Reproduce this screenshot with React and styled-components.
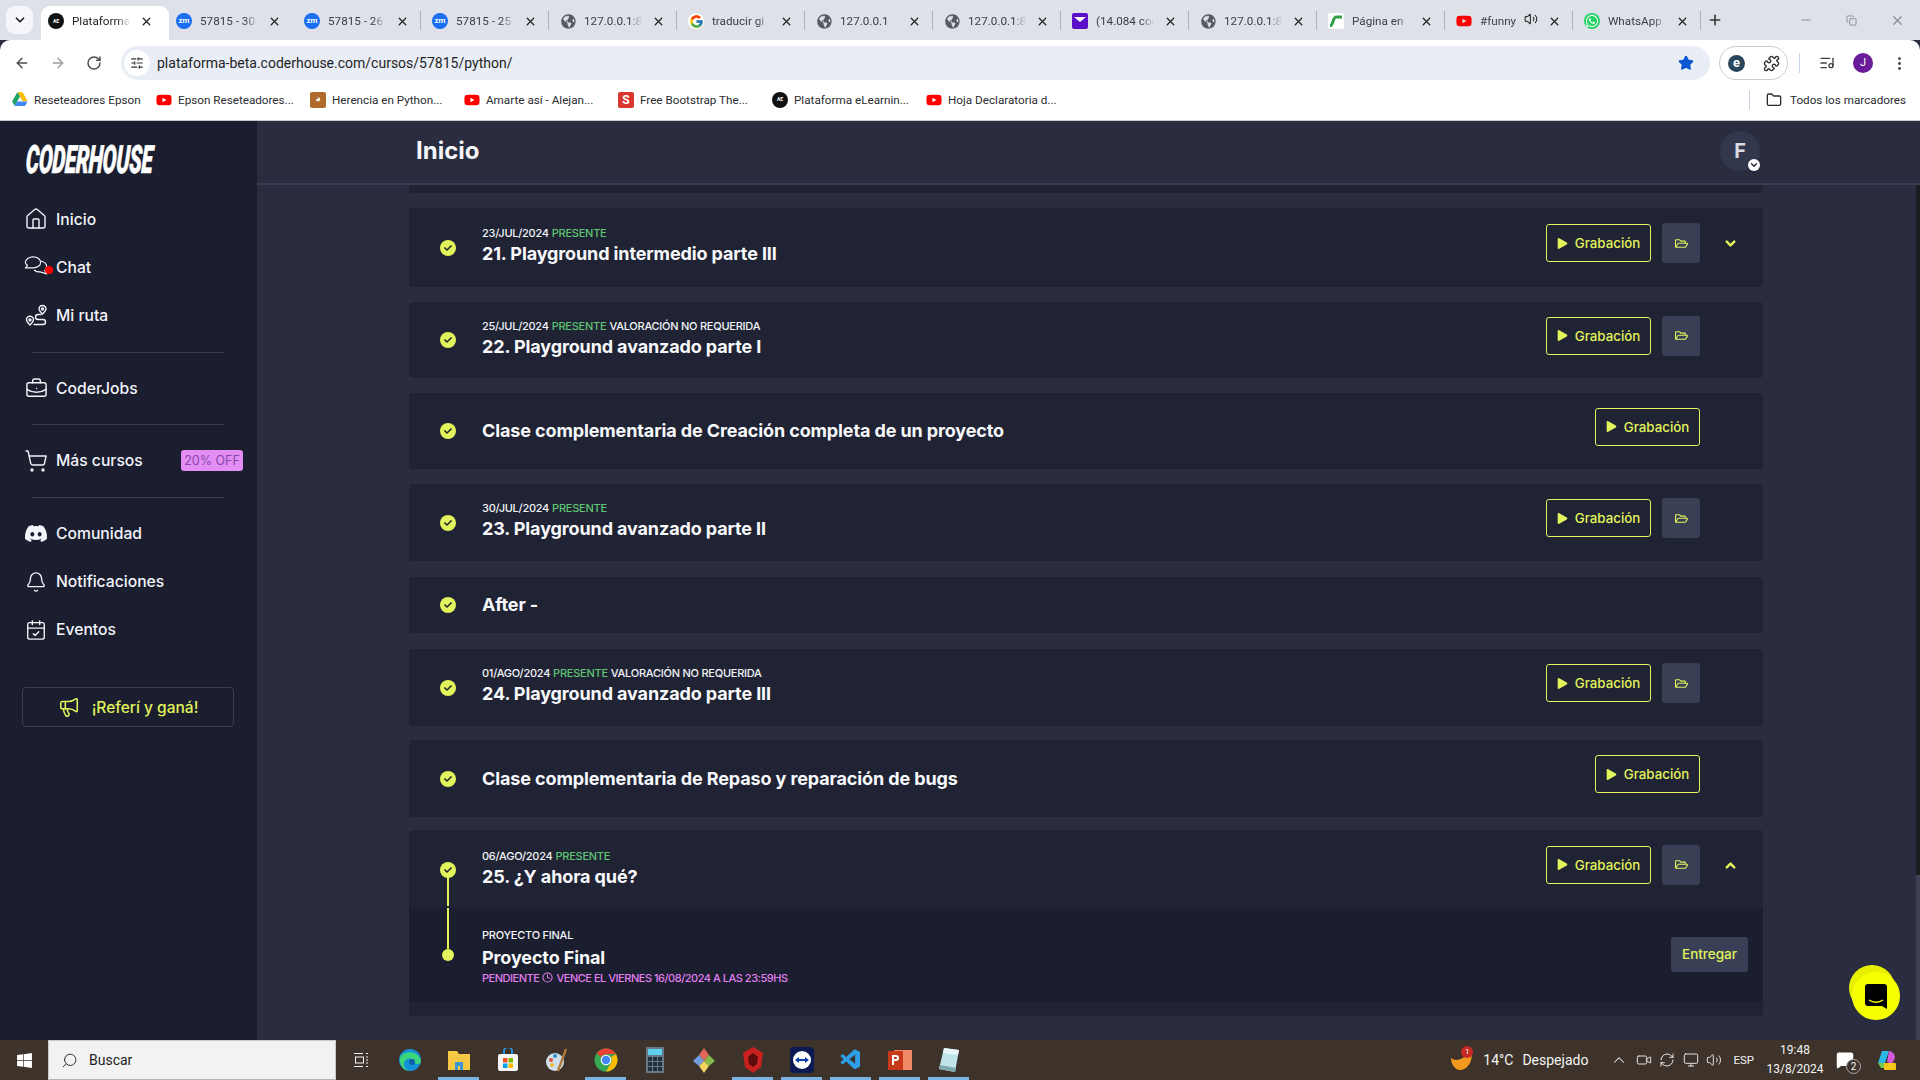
import React from "react";
import styled, { createGlobalStyle } from "styled-components";
import {
  ArrowLeft, ArrowRight, Bell, BriefcaseBusiness, CalendarCheck, ChevronDown, ChevronUp, Clock, Copy, EllipsisVertical, Folder,
  House, ListMusic, Megaphone, Minus, Plus, Puzzle, RotateCw, Search, ShoppingCart, SlidersHorizontal,
  Star, Volume2, X, Video, Monitor, MessageSquare, RefreshCw
} from "lucide-react";
import { FaDiscord, FaGlobeAmericas, FaPlay, FaRegFolderOpen, FaWhatsapp, FaWindows, FaYoutube, FaCheck } from "react-icons/fa";
import { FcGoogle } from "react-icons/fc";
import { VscVscode } from "react-icons/vsc";

const lime = "#e2f35c";
const chromeFont = `"Roboto", "Liberation Sans", sans-serif`;

const GlobalStyle = createGlobalStyle`
  html, body { margin: 0; height: 100%; overflow: hidden; background: #2a2d3f; }
  * { box-sizing: border-box; }
  body { font-family: "Inter", "Liberation Sans", sans-serif; }
`;

const Shell = styled.div`
  display: flex;
  flex-direction: column;
  height: 1080px;
  width: 1920px;
  overflow: hidden;
`;

/* browser chrome */
const TabStrip = styled.div`
  display: flex;
  align-items: center;
  height: 40px;
  background: #dee1e7;
  padding-left: 6px;
  font-family: ${chromeFont};
`;

const TabMenu = styled.div`
  width: 27px;
  height: 28px;
  margin-top: 0;
  margin-right: 8px;
  border-radius: 9px;
  background: #f4f6fb;
  color: #222;
  display: flex;
  align-items: center;
  justify-content: center;
`;

const Tab = styled.div`
  position: relative;
  display: flex;
  align-items: center;
  width: 128px;
  height: 34px;
  margin-top: 6px;
  padding: 0 0 4px 7px;
  gap: 8px;
  font-size: 11.7px;
  color: ${({ $active }) => ($active ? "#1f1f1f" : "#3b3f45")};
  border-radius: 9px 9px 0 0;
  background: ${({ $active }) => ($active ? "#fff" : "transparent")};

  &::after {
    content: "";
    position: absolute;
    right: 4px;
    top: 5px;
    width: 1px;
    height: 19px;
    background: ${({ $plain }) => ($plain ? "transparent" : "#aeb2b8")};
  }
`;

const TabLabel = styled.span`
  width: 58px;
  white-space: nowrap;
  overflow: hidden;
  mask-image: linear-gradient(90deg, #000 78%, transparent);
`;

const TabClose = styled.span`
  display: flex;
  margin-left: auto;
  margin-right: 16px;
  color: #222;
`;

const Speaker = styled.span`
  display: flex;
  position: absolute;
  left: 75px;
  top: 6px;
  color: #333;
`;

const Fav = styled.span`
  width: 16px;
  height: 16px;
  flex: none;
  display: flex;
  align-items: center;
  justify-content: center;
  border-radius: ${({ $square }) => ($square ? "2px" : "50%")};
  background: ${({ $bg }) => $bg || "transparent"};
  color: ${({ $fg }) => $fg || "#fff"};
  font-size: ${({ $size }) => $size || 8}px;
  font-weight: 700;
  line-height: 1;
  overflow: hidden;
`;

const NewTab = styled.span`
  display: flex;
  margin: 0 0 0 2px;
  color: #333;
`;

const WindowControls = styled.div`
  display: flex;
  align-items: center;
  margin-left: auto;
  padding-right: 15px;
  gap: 33px;
  color: #8a8d92;
`;

const Toolbar = styled.div`
  display: flex;
  align-items: center;
  height: 40px;
  padding-top: 6px;
  background: #fff;
  border-radius: 10px 10px 0 0;
`;

const NavIcons = styled.div`
  display: flex;
  width: 121px;
  padding-left: 14px;
  gap: 20px;
  color: #4a4d52;
`;

const UrlBar = styled.div`
  display: flex;
  align-items: center;
  width: 1589px;
  height: 34px;
  border-radius: 17px;
  background: #e9edf6;
  padding: 0 16px 0 3px;
  font: 400 14px ${chromeFont};
  color: #1f1f1f;
`;

const SiteInfo = styled.span`
  width: 26px;
  height: 26px;
  margin-right: 7px;
  border-radius: 50%;
  background: #fff;
  display: flex;
  align-items: center;
  justify-content: center;
  color: #333;
`;

const UrlStar = styled.span`
  display: flex;
  margin-left: auto;
  color: #0b57d0;
`;

const ExtensionPill = styled.div`
  display: flex;
  align-items: center;
  justify-content: space-between;
  width: 69px;
  height: 34px;
  margin-left: 9px;
  padding: 0 7px 0 8px;
  border: 1px solid #c9ccd2;
  border-radius: 17px;
  color: #333;
`;

const ExtE = styled.span`
  width: 17px;
  height: 17px;
  border-radius: 50%;
  background: #29465c;
  color: #fff;
  font: 700 13px/16px ${chromeFont};
  text-align: center;
`;

const ToolSep = styled.span`
  width: 1px;
  height: 20px;
  margin: 0 19px 0 11px;
  background: #c8d4e4;
`;

const ToolRight = styled.div`
  display: flex;
  align-items: center;
  gap: 18px;
  color: #3c3f43;
`;

const Account = styled.span`
  width: 20px;
  height: 20px;
  border-radius: 50%;
  background: #6a1b9a;
  color: #fff;
  font: 400 11px/20px ${chromeFont};
  text-align: center;
`;

const BookmarkBar = styled.div`
  display: flex;
  align-items: center;
  height: 41px;
  padding: 0 14px 1px 12px;
  background: #fff;
  border-bottom: 1px solid #c8cacc;
  font: 400 11.7px ${chromeFont};
  color: #2a2c30;
`;

const Bookmark = styled.span`
  display: flex;
  align-items: center;
  gap: 6px;
  width: ${({ $first }) => ($first ? 144 : 154)}px;
  white-space: nowrap;
`;

const AllBookmarks = styled.span`
  display: flex;
  align-items: center;
  margin-left: auto;
  gap: 8px;
  padding-left: 16px;
  border-left: 1px solid #c8d4e4;
  height: 20px;
  white-space: nowrap;
`;

/* page */
const Page = styled.div`
  display: flex;
  flex: 1;
  min-height: 0;
`;

const Sidebar = styled.aside`
  width: 257px;
  flex: none;
  background: #1b1e2e;
  color: #f2f4fa;
  padding-top: 23px;
`;

const LogoBox = styled.div`
  height: 51px;
  padding-left: 26px;
`;

const Logo = styled.div`
  width: 230px;
  font: italic 900 39px/32px "Roboto", sans-serif;
  letter-spacing: -0.5px;
  color: #fff;
  white-space: nowrap;
  transform: scaleX(0.53) skewX(-6deg);
  transform-origin: left center;
  -webkit-text-stroke: 0.6px #fff;
`;

const NavItem = styled.div`
  position: relative;
  display: flex;
  align-items: center;
  height: 48.2px;
  padding: 0 14px 0 24px;
  gap: 8px;
  font-size: 15.7px;
  font-weight: 500;
`;

const NavIcon = styled.span`
  width: 24px;
  height: 24px;
  display: flex;
  align-items: center;
  justify-content: center;
`;

const Dot = styled.span`
  position: absolute;
  left: 45px;
  top: 23px;
  width: 8px;
  height: 8px;
  border-radius: 50%;
  background: #ff0000;
`;

const OffBadge = styled.span`
  margin-left: auto;
  width: 62px;
  height: 21px;
  border-radius: 3px;
  background: #e48df5;
  color: #8549a8;
  font-size: 12.5px;
  font-weight: 400;
  line-height: 21px;
  text-align: center;
`;

const Divider = styled.hr`
  width: 192px;
  height: 1px;
  margin: 12px 0 11.5px 32px;
  border: 0;
  background: #383c50;
`;

const ReferButton = styled.div`
  display: flex;
  align-items: center;
  justify-content: center;
  gap: 12px;
  width: 212px;
  height: 40px;
  margin: 33px 0 0 22px;
  border: 1px solid #3a3e52;
  border-radius: 4px;
  color: ${lime};
  font-size: 15.5px;
  font-weight: 500;
`;

const Main = styled.main`
  flex: 1;
  min-width: 0;
  display: flex;
  flex-direction: column;
  background: #2a2d3f;
`;

const Header = styled.header`
  display: flex;
  align-items: center;
  justify-content: space-between;
  flex: none;
  height: 64px;
  padding: 0 160px 2px 159px;
  border-bottom: 2px solid #393e55;
`;

const Title = styled.h1`
  margin: 0 0 1px;
  font-size: 24px;
  font-weight: 700;
  color: #f5f6fa;
`;

const Avatar = styled.div`
  position: relative;
  width: 40px;
  height: 40px;
  border-radius: 50%;
  background: #32374c;
  color: #d9dbe2;
  font-size: 20px;
  font-weight: 700;
  line-height: 40px;
  text-align: center;
`;

const AvatarBadge = styled.span`
  position: absolute;
  right: 0;
  bottom: 0;
  width: 12px;
  height: 12px;
  border-radius: 50%;
  background: #fff;
  color: #1b1e2e;
  display: flex;
  align-items: center;
  justify-content: center;
`;

const Content = styled.div`
  display: flex;
  flex: 1;
  min-height: 0;
`;

const List = styled.div`
  flex: 1;
  min-width: 0;
  padding: 0 153px 0 152px;
  overflow: hidden;
`;

const ScrollTrack = styled.div`
  width: 4px;
  flex: none;
  display: flex;
  background: #1b1c20;
`;

const ScrollThumb = styled.div`
  width: 4px;
  height: 165px;
  margin-top: auto;
  background: #3d4052;
`;

const Card = styled.section`
  background: #202333;
  border-radius: ${({ $cut }) => ($cut ? "0 0 4px 4px" : "4px")};
  margin-bottom: ${({ $gap }) => $gap}px;
  padding-bottom: ${({ $pad }) => $pad || 0}px;
`;

const Row = styled.div`
  display: flex;
  align-items: center;
  height: ${({ $h }) => $h}px;
  background: ${({ $inner }) => ($inner ? "#1b1e2e" : "transparent")};
`;

const StatusCol = styled.div`
  position: relative;
  width: 73px;
  flex: none;
  display: flex;
  justify-content: center;
  padding-left: 5px;
  padding-top: ${({ $nudge }) => $nudge || 0}px;
`;

const Check = styled.span`
  position: relative;
  z-index: 1;
  width: 16px;
  height: 16px;
  border-radius: 50%;
  background: ${lime};
  color: #20232f;
  display: flex;
  align-items: center;
  justify-content: center;
`;

const FinalDot = styled.span`
  position: relative;
  z-index: 1;
  width: 12px;
  height: 12px;
  border-radius: 50%;
  background: ${lime};
`;

const Connector = styled.span`
  position: absolute;
  left: 38px;
  width: 2px;
  background: ${lime};
  top: ${({ $top }) => $top}px;
  height: ${({ $h }) => $h}px;
`;

const Info = styled.div`
  flex: 1;
  min-width: 0;
  padding-bottom: ${({ $lift }) => $lift || 0}px;
  padding-top: ${({ $drop }) => $drop || 0}px;
`;

const Meta = styled.div`
  display: flex;
  gap: 3px;
  font-size: 11px;
  font-weight: 500;
  line-height: 14px;
  letter-spacing: -0.25px;
  color: #f2f4fa;
  text-transform: uppercase;
`;

const Present = styled.span`
  color: #5fc573;
`;

const ClassTitle = styled.h3`
  margin: ${({ $top }) => $top ?? 2}px 0 0;
  font-size: 18px;
  font-weight: 700;
  line-height: 24px;
  letter-spacing: -0.12px;
  color: #f8f9fc;
`;

const Pending = styled.div`
  display: flex;
  align-items: center;
  gap: 3px;
  margin-top: 1px;
  font-size: 11px;
  font-weight: 500;
  line-height: 14px;
  letter-spacing: -0.48px;
  color: #e07ff0;
`;

const Actions = styled.div`
  display: flex;
  align-items: center;
  gap: 11px;
  flex: none;
  margin-bottom: 9px;
`;

const RecButton = styled.div`
  display: flex;
  align-items: center;
  justify-content: center;
  gap: 7px;
  width: 105px;
  height: 38px;
  border: 1px solid ${lime};
  border-radius: 3px;
  color: ${lime};
  font-size: 13.3px;
  font-weight: 500;
`;

const FolderButton = styled.div`
  width: 38px;
  height: 40px;
  border-radius: 3px;
  background: #394056;
  color: ${lime};
  display: flex;
  align-items: center;
  justify-content: center;
`;

const ChevronSlot = styled.div`
  width: 63px;
  flex: none;
  display: flex;
  justify-content: center;
  padding: 0 3px 8px 0;
  color: ${lime};
`;

const DeliverButton = styled.div`
  width: 77px;
  height: 35px;
  margin: 0 15px 1px 0;
  border-radius: 3px;
  background: #394056;
  color: ${lime};
  font-size: 13.5px;
  font-weight: 500;
  line-height: 35px;
  text-align: center;
`;

const Widget = styled.div`
  position: absolute;
  left: 1852px;
  top: 972px;
  width: 48px;
  height: 48px;
  border-radius: 50%;
  background: #f6ff00;
  box-shadow: -4px -8px 0 -1px #e8ef00;
  display: flex;
  align-items: center;
  justify-content: center;
`;

/* windows taskbar */
const Taskbar = styled.footer`
  display: flex;
  align-items: center;
  flex: none;
  height: 40px;
  background: #3d332b;
  color: #f3f3f3;
  font-family: ${chromeFont};
`;

const StartBtn = styled.div`
  width: 48px;
  display: flex;
  justify-content: center;
  color: #fff;
`;

const SearchBox = styled.div`
  display: flex;
  align-items: center;
  gap: 11px;
  width: 288px;
  height: 40px;
  padding-left: 12px;
  background: #f2f2f2;
  border: 1px solid #c9c9c9;
  border-bottom-color: #b5b5b5;
  color: #222;
  font-size: 14px;
`;

const MirroredSearch = styled(Search)`
  transform: scaleX(-1);
`;

const TaskView = styled.div`
  width: 49px;
  display: flex;
  justify-content: center;
  color: #f3f3f3;
`;

const TaskApps = styled.div`
  display: flex;
  height: 40px;
`;

const TaskApp = styled.div`
  width: 49px;
  height: 40px;
  display: flex;
  align-items: center;
  justify-content: center;
  padding-bottom: 1px;
  box-shadow: ${({ $open }) => ($open ? "inset 0 -3px 0 0 #7db3e2" : "none")};
  clip-path: inset(0 4px 0 4px);
`;

const Tray = styled.div`
  display: flex;
  align-items: center;
  margin-left: auto;
  height: 40px;
  font-size: 14px;
`;

const Weather = styled.div`
  position: relative;
  display: flex;
  align-items: center;
  margin-right: 22px;
  gap: 9px;
  font-size: 14px;
`;

const WeatherAlert = styled.span`
  position: absolute;
  left: 11px;
  top: -3px;
  width: 12px;
  height: 12px;
  border-radius: 50%;
  background: #c62a22;
  color: #fff;
  font-size: 8px;
  line-height: 12px;
  text-align: center;
`;

const TrayIcons = styled.div`
  display: flex;
  align-items: center;
  gap: 7.5px;
  color: #eee;
`;

const Lang = styled.span`
  margin: 0 9px 0 11px;
  font-size: 11.5px;
`;

const Clocks = styled.div`
  width: 64px;
  text-align: center;
  font-size: 12px;
  line-height: 19px;
`;

const Notify = styled.div`
  position: relative;
  display: flex;
  margin-left: 9px;
  margin-right: 22px;
  color: #fff;
`;

const NotifyCount = styled.span`
  position: absolute;
  left: 10px;
  top: 8px;
  width: 15px;
  height: 15px;
  border-radius: 50%;
  background: #3d332b;
  border: 1px solid #aaa;
  font-size: 10px;
  line-height: 13px;
  text-align: center;
`;

const CopilotBox = styled.div`
  display: flex;
  padding-right: 24px;
`;

const tabs = [
  { label: "Plataforma", fav: "coder", active: true },
  { label: "57815 - 30", fav: "zoom", plain: true },
  { label: "57815 - 26", fav: "zoom" },
  { label: "57815 - 25", fav: "zoom" },
  { label: "127.0.0.1:8", fav: "globe" },
  { label: "traducir gi", fav: "google" },
  { label: "127.0.0.1", fav: "globe" },
  { label: "127.0.0.1:8", fav: "globe" },
  { label: "(14.084 cor", fav: "mail" },
  { label: "127.0.0.1:8", fav: "globe" },
  { label: "Página en", fav: "flag" },
  { label: "#funny", fav: "yt", muted: true },
  { label: "WhatsApp", fav: "wa" }
];

const Favicon = ({ kind }) => {
  switch (kind) {
    case "coder":
      return <Fav $bg="#111" $size={5}>AE</Fav>;
    case "zoom":
      return <Fav $bg="#1a6ef0" $size={8}>zm</Fav>;
    case "globe":
      return <Fav $fg="#555a61"><FaGlobeAmericas size={15} /></Fav>;
    case "google":
      return <Fav $bg="#fff"><FcGoogle size={15} /></Fav>;
    case "mail":
      return <Fav $square $bg="#5b10c9"><svg width="12" height="10" viewBox="0 0 12 10"><path d="M0 1h12L6 6z" fill="#fff" /></svg></Fav>;
    case "flag":
      return <Fav $square $bg="#fff"><svg width="14" height="12" viewBox="0 0 14 12"><path d="M1 11c3 0 3-9 6-9h6" stroke="#2ea043" strokeWidth="3" fill="none" /></svg></Fav>;
    case "yt":
      return <Fav $fg="#f00" $square><FaYoutube size={16} /></Fav>;
    case "wa":
      return <Fav $bg="#25d366"><FaWhatsapp size={14} /></Fav>;
    case "s":
      return <Fav $square $bg="#d9372d" $size={12}>S</Fav>;
    case "drive":
      return <Fav><svg width="16" height="15" viewBox="0 0 16 15"><path d="M5.5 0h5l5 9h-5z" fill="#fbbc04" /><path d="M5.5 0L0 9.5l2.5 4.5L8 4.500z" fill="#1fa463" /><path d="M2.5 14h10.5l2.5-4.500H5z" fill="#4285f4" /></svg></Fav>;
    case "cat":
      return <Fav $square $bg="#b06a2c" $size={9}>◕</Fav>;
    default:
      return null;
  }
};

const bookmarks = [
  ["drive", "Reseteadores Epson"],
  ["yt", "Epson Reseteadores..."],
  ["cat", "Herencia en Python..."],
  ["yt", "Amarte así - Alejan..."],
  ["s", "Free Bootstrap The..."],
  ["coder", "Plataforma eLearnin..."],
  ["yt", "Hoja Declaratoria d..."]
];

const TabBar = () => (
  <TabStrip>
    <TabMenu><ChevronDown size={14} strokeWidth={3} /></TabMenu>
    {tabs.map((t, i) => (
      <Tab key={i} $active={t.active} $plain={t.active || t.plain}>
        <Favicon kind={t.fav} />
        <TabLabel>{t.label}</TabLabel>
        {t.muted && <Speaker><Volume2 size={14} /></Speaker>}
        <TabClose><X size={13} strokeWidth={2.4} /></TabClose>
      </Tab>
    ))}
    <NewTab><Plus size={16} strokeWidth={2.4} /></NewTab>
    <WindowControls>
      <Minus size={14} />
      <Copy size={11} />
      <X size={15} />
    </WindowControls>
  </TabStrip>
);

const AddressRow = () => (
  <Toolbar>
    <NavIcons>
      <ArrowLeft size={16} strokeWidth={2.2} />
      <ArrowRight size={16} strokeWidth={2.2} color="#9a9da2" />
      <RotateCw size={16} strokeWidth={2.2} />
    </NavIcons>
    <UrlBar>
      <SiteInfo><SlidersHorizontal size={14} /></SiteInfo>
      plataforma-beta.coderhouse.com/cursos/57815/python/
      <UrlStar><Star size={16} fill="#0b57d0" /></UrlStar>
    </UrlBar>
    <ExtensionPill>
      <ExtE>e</ExtE>
      <Puzzle size={17} />
    </ExtensionPill>
    <ToolSep />
    <ToolRight>
      <ListMusic size={16} />
      <Account>J</Account>
      <EllipsisVertical size={17} />
    </ToolRight>
  </Toolbar>
);

const Bookmarks = () => (
  <BookmarkBar>
    {bookmarks.map(([fav, label], i) => (
      <Bookmark key={label} $first={i === 0}><Favicon kind={fav} />{label}</Bookmark>
    ))}
    <AllBookmarks><Folder size={16} />Todos los marcadores</AllBookmarks>
  </BookmarkBar>
);

const ChatIcon = () => (
  <svg width="28" height="26" viewBox="0 0 26 24" fill="none" stroke="currentColor" strokeWidth="1.3" strokeLinejoin="round">
    <path d="M10 1c4.500 0 8 2.600 8 6s-3.500 6-8 6H1.500l2.300-2.600C2.600 9.400 1.500 8.300 1.500 7 1.500 3.600 5.500 1 10 1z" />
    <path d="M18 5.500c3.500.7 6.500 3 6.500 6.300 0 1.600-.8 2.900-2 3.900l2 3.800-7-2.200c-2.800 0-5.300-.7-6.500-2.300" />
  </svg>
);

const RouteIcon = () => (
  <svg width="24" height="24" viewBox="0 0 24 24" fill="none" stroke="currentColor" strokeWidth="1.4">
    <path d="M6 22c-2-2-3.500-3.500-3.500-5.200a3.500 3.500 0 0 1 7 0C9.500 18.500 8 20 6 22z" />
    <circle cx="6" cy="17" r="1" />
    <path d="M18.500 11c-2-2-3.500-3.200-3.500-5a3.500 3.500 0 0 1 7 0c0 1.800-1.500 3-3.500 5z" />
    <circle cx="18.500" cy="6" r="1" />
    <path d="M17 11.500h-3a2.500 2.500 0 0 0 0 5h5a2.500 2.500 0 0 1 0 5H10" strokeLinecap="round" />
  </svg>
);

const navTop = [
  [<House size={24} strokeWidth={1.4} />, "Inicio"],
  [<ChatIcon />, "Chat", true],
  [<RouteIcon />, "Mi ruta"]
];

const navBottom = [
  [<FaDiscord size={25} />, "Comunidad"],
  [<Bell size={22} strokeWidth={1.5} />, "Notificaciones"],
  [<CalendarCheck size={22} strokeWidth={1.5} />, "Eventos"]
];

const Nav = ({ icon, label, dot, children }) => (
  <NavItem>
    <NavIcon>{icon}</NavIcon>
    {dot && <Dot />}
    {label}
    {children}
  </NavItem>
);

const Side = () => (
  <Sidebar>
    <LogoBox><Logo>CODERHOUSE</Logo></LogoBox>
    {navTop.map(([icon, label, dot]) => <Nav key={label} icon={icon} label={label} dot={dot} />)}
    <Divider />
    <Nav icon={<BriefcaseBusiness size={23} strokeWidth={1.5} />} label="CoderJobs" />
    <Divider />
    <Nav icon={<ShoppingCart size={24} strokeWidth={1.4} />} label="Más cursos">
      <OffBadge>20% OFF</OffBadge>
    </Nav>
    <Divider />
    {navBottom.map(([icon, label]) => <Nav key={label} icon={icon} label={label} />)}
    <ReferButton><Megaphone size={22} strokeWidth={1.7} />¡Referí y ganá!</ReferButton>
  </Sidebar>
);

const classes = [
  { h: 79, gap: 15, date: "23/Jul/2024", name: "21. Playground intermedio parte III", folder: true, chevron: "down" },
  { h: 76, gap: 15, date: "25/Jul/2024", name: "22. Playground avanzado parte I", folder: true, note: "Valoración no requerida" },
  { h: 76, gap: 15, name: "Clase complementaria de Creación completa de un proyecto" },
  { h: 77, gap: 16, date: "30/Jul/2024", name: "23. Playground avanzado parte II", folder: true },
  { h: 56, gap: 16, name: "After -", noRec: true },
  { h: 77, gap: 14, date: "01/Ago/2024", name: "24. Playground avanzado parte III", folder: true, note: "Valoración no requerida" },
  { h: 77, gap: 13, name: "Clase complementaria de Repaso y reparación de bugs" }
];

const RecordActions = ({ folder, chevron }) => (
  <>
    <Actions>
      <RecButton><FaPlay size={11} />Grabación</RecButton>
      {folder && <FolderButton><FaRegFolderOpen size={13} /></FolderButton>}
    </Actions>
    <ChevronSlot>
      {chevron === "down" && <ChevronDown size={15} strokeWidth={4} />}
      {chevron === "up" && <ChevronUp size={15} strokeWidth={4} />}
    </ChevronSlot>
  </>
);

const ClassInfo = ({ date, note, name, lift }) => (
  <Info $lift={lift}>
    {date && (
      <Meta>
        {date} <Present>Presente</Present> {note && <span>{note}</span>}
      </Meta>
    )}
    <ClassTitle $top={date ? 2 : 0}>{name}</ClassTitle>
  </Info>
);

const DoneCheck = () => <Check><FaCheck size={8} /></Check>;

const Lessons = () => (
  <List>
    <Card $cut $gap={15}><Row $h={8} /></Card>
    {classes.map((c) => (
      <Card key={c.name} $gap={c.gap}>
        <Row $h={c.h}>
          <StatusCol><DoneCheck /></StatusCol>
          <ClassInfo {...c} lift={c.date ? 3 : 0} />
          {!c.noRec && <RecordActions folder={c.folder} chevron={c.chevron} />}
        </Row>
      </Card>
    ))}
    <Card $gap={0} $pad={14}>
      <Row $h={78}>
        <StatusCol $nudge={2}>
          <Connector $top={16} $h={30} />
          <DoneCheck />
        </StatusCol>
        <ClassInfo date="06/Ago/2024" name="25. ¿Y ahora qué?" />
        <RecordActions folder chevron="up" />
      </Row>
      <Row $inner $h={94}>
        <StatusCol>
          <Connector $top={-41} $h={41} />
          <FinalDot />
        </StatusCol>
        <Info $drop={2}>
          <Meta>Proyecto final</Meta>
          <ClassTitle $top={4}>Proyecto Final</ClassTitle>
          <Pending>PENDIENTE <Clock size={11} strokeWidth={2.2} /> VENCE EL VIERNES 16/08/2024 A LAS 23:59HS</Pending>
        </Info>
        <DeliverButton>Entregar</DeliverButton>
      </Row>
    </Card>
  </List>
);

/* small hand drawn app icons of the taskbar */
const TaskViewIcon = () => (
  <svg width="16" height="16" viewBox="0 0 16 16" fill="none" stroke="currentColor">
    <path d="M1 1.500h9M13 1.500h2M1 14.500h9M13 14.500h2" />
    <rect x="2.500" y="5" width="8" height="6" />
    <path d="M13 5h2M13 8h2M13 11h2" />
  </svg>
);
const EdgeIcon = () => (
  <svg width="24" height="24" viewBox="0 0 24 24">
    <circle cx="12" cy="12" r="11" fill="#1590d8" />
    <path d="M2 10C4 3 20 1 23 13c0 4-6 4-7 1 1-4-9-6-10 2 0 3 2 6 6 7-6 0-11-6-10-13z" fill="#3bd57b" />
    <circle cx="14" cy="14" r="3" fill="#0d5ea8" />
  </svg>
);
const FolderIcon = () => (
  <svg width="24" height="24" viewBox="0 0 24 24">
    <path d="M1 3h9l2 3h11v16H1z" fill="#f6c944" />
    <path d="M8 14h8v8h-3v-4h-2v4H8z" fill="#3a97d4" />
  </svg>
);
const StoreIcon = () => (
  <svg width="22" height="24" viewBox="0 0 22 24">
    <path d="M7 6V3a4 4 0 0 1 8 0v3" stroke="#2a8fd8" strokeWidth="2" fill="none" />
    <rect x="1" y="6" width="20" height="17" rx="2" fill="#f4f4f4" />
    <path d="M6 10h4.500v4.500H6z" fill="#f25022" /><path d="M11.500 10H16v4.500h-4.500z" fill="#7fba00" />
    <path d="M6 15.500h4.500V20H6z" fill="#00a4ef" /><path d="M11.500 15.500H16V20h-4.500z" fill="#ffb900" />
  </svg>
);
const PaintIcon = () => (
  <svg width="24" height="24" viewBox="0 0 24 24">
    <ellipse cx="10" cy="14" rx="9" ry="9" fill="#cfe0ea" />
    <circle cx="6" cy="12" r="2" fill="#e04c3c" /><circle cx="10" cy="8" r="2" fill="#2f8ccf" /><circle cx="7" cy="17" r="2" fill="#f2b632" />
    <path d="M13 23L21 1" stroke="#b07a3e" strokeWidth="2.400" />
  </svg>
);
const ChromeIcon = () => (
  <svg width="24" height="24" viewBox="0 0 24 24">
    <circle cx="12" cy="12" r="11.500" fill="#34a853" />
    <path d="M12 .5a11.500 11.500 0 0 1 10 5.800H12a5.700 5.700 0 0 0-5 2.900L2.700 5.300A11.500 11.500 0 0 1 12 .5z" fill="#ea4335" />
    <path d="M22 6.300A11.500 11.500 0 0 1 12 23.500l4.900-8.600A5.700 5.700 0 0 0 17 9z" fill="#fbbc04" />
    <circle cx="12" cy="12" r="5.300" fill="#fff" /><circle cx="12" cy="12" r="4.200" fill="#4285f4" />
  </svg>
);
const CalcIcon = () => (
  <svg width="18" height="26" viewBox="0 0 18 26">
    <rect width="18" height="26" rx="1" fill="#68798a" />
    <rect x="2" y="2" width="14" height="6" fill="#5fd0ee" />
    {[10, 15, 20].map((y) => [2, 7, 12].map((x) => <rect key={`${x}${y}`} x={x} y={y} width="4" height="4" fill="#23303c" />))}
  </svg>
);
const DiamondIcon = () => (
  <svg width="24" height="26" viewBox="0 0 24 26">
    <path d="M12 1l5 7-5 6-5-6z" fill="#e0675a" /><path d="M17 8l6 6-6 5-5-5z" fill="#86b84b" />
    <path d="M7 8l5 6-5 5-6-5z" fill="#6e9ee0" /><path d="M7 19l5-5 5 5-5 7z" fill="#f1d260" />
  </svg>
);
const RedHexIcon = () => (
  <svg width="22" height="26" viewBox="0 0 22 26">
    <path d="M11 0l10 6-2 14-8 6-8-6L1 6z" fill="#c9211e" />
    <path d="M11 6l5 4-1 7-4 3-4-3-1-7z" fill="#5d0c0c" />
  </svg>
);
const TeamViewerIcon = () => (
  <svg width="24" height="26" viewBox="0 0 24 26">
    <rect width="24" height="26" rx="4" fill="#0a1a52" />
    <circle cx="12" cy="13" r="9" fill="#fff" />
    <path d="M5 13l4-3v2h6v-2l4 3-4 3v-2H9v2z" fill="#0a3fa8" />
  </svg>
);
const PptIcon = () => (
  <svg width="24" height="24" viewBox="0 0 24 24">
    <rect x="6" y="2" width="18" height="20" fill="#f08a67" />
    <rect y="3" width="15" height="19" fill="#c8391a" />
    <path d="M4 7h4a3 3 0 0 1 0 6H6v4H4zM6 9v2h2a1 1 0 0 0 0-2z" fill="#fff" />
  </svg>
);
const NotesIcon = () => (
  <svg width="22" height="26" viewBox="0 0 22 26">
    <path d="M6 1l15 2-4 22-16-3z" fill="#bfe5ea" />
    <path d="M6 1l15 2-1 5-15-2z" fill="#e7f7f8" />
    <path d="M1 22l16 3 1-4-16-3z" fill="#7fa9ae" />
  </svg>
);

const taskApps = [
  [<EdgeIcon />], [<FolderIcon />, true], [<StoreIcon />], [<PaintIcon />], [<ChromeIcon />, true], [<CalcIcon />],
  [<DiamondIcon />], [<RedHexIcon />, true], [<TeamViewerIcon />, true], [<VscVscode size={24} color="#2e9fe6" />, true],
  [<PptIcon />, true], [<NotesIcon />, true]
];

const WinBar = () => (
  <Taskbar>
    <StartBtn><FaWindows size={17} /></StartBtn>
    <SearchBox><MirroredSearch size={17} strokeWidth={1.3} />Buscar</SearchBox>
    <TaskView><TaskViewIcon /></TaskView>
    <TaskApps>
      {taskApps.map(([icon, open], i) => <TaskApp key={i} $open={open}>{icon}</TaskApp>)}
    </TaskApps>
    <Tray>
      <Weather>
        <svg width="24" height="22" viewBox="0 0 24 22"><path d="M1 9c5 4 13 2 20-8 3 10-3 20-11 20C5 21 1 15 1 9z" fill="#f29a1f" /></svg>
        <WeatherAlert>1</WeatherAlert>
        <span>14°C</span>
        <span>Despejado</span>
      </Weather>
      <TrayIcons>
        <ChevronUp size={18} strokeWidth={1.4} />
        <Video size={16} strokeWidth={1.4} />
        <RefreshCw size={16} strokeWidth={1.4} color="#f0f0f0" />
        <Monitor size={16} strokeWidth={1.4} />
        <Volume2 size={16} strokeWidth={1.4} />
      </TrayIcons>
      <Lang>ESP</Lang>
      <Clocks>19:48<br />13/8/2024</Clocks>
      <Notify>
        <MessageSquare size={18} fill="#fff" />
        <NotifyCount>2</NotifyCount>
      </Notify>
      <CopilotBox>
        <svg width="20" height="20" viewBox="0 0 20 20">
          <path d="M6 1h7l-4 12H2z" fill="#2bb6e8" /><path d="M13 1c3 0 6 3 6 7l-3 6-5-2z" fill="#d558d9" />
          <path d="M2 13h9l-2 5H5z" fill="#7cc84a" /><rect x="8" y="13" width="12" height="7" rx="1" fill="#f5c518" />
        </svg>
      </CopilotBox>
    </Tray>
  </Taskbar>
);

const App = () => (
  <Shell>
    <GlobalStyle />
    <TabBar />
    <AddressRow />
    <Bookmarks />
    <Page>
      <Side />
      <Main>
        <Header>
          <Title>Inicio</Title>
          <Avatar>
            F
            <AvatarBadge><ChevronDown size={10} strokeWidth={3} /></AvatarBadge>
          </Avatar>
        </Header>
        <Content>
          <Lessons />
          <ScrollTrack><ScrollThumb /></ScrollTrack>
        </Content>
      </Main>
    </Page>
    <WinBar />
    <Widget>
      <svg width="22" height="25" viewBox="0 0 22 25">
        <path d="M3 0h16a3 3 0 0 1 3 3v22l-5-3H3a3 3 0 0 1-3-3V3a3 3 0 0 1 3-3z" fill="#000" />
        <path d="M4 16c4 3 10 3 14 0" stroke="#f6ff00" strokeWidth="1.400" fill="none" />
      </svg>
    </Widget>
  </Shell>
);

export default App;
